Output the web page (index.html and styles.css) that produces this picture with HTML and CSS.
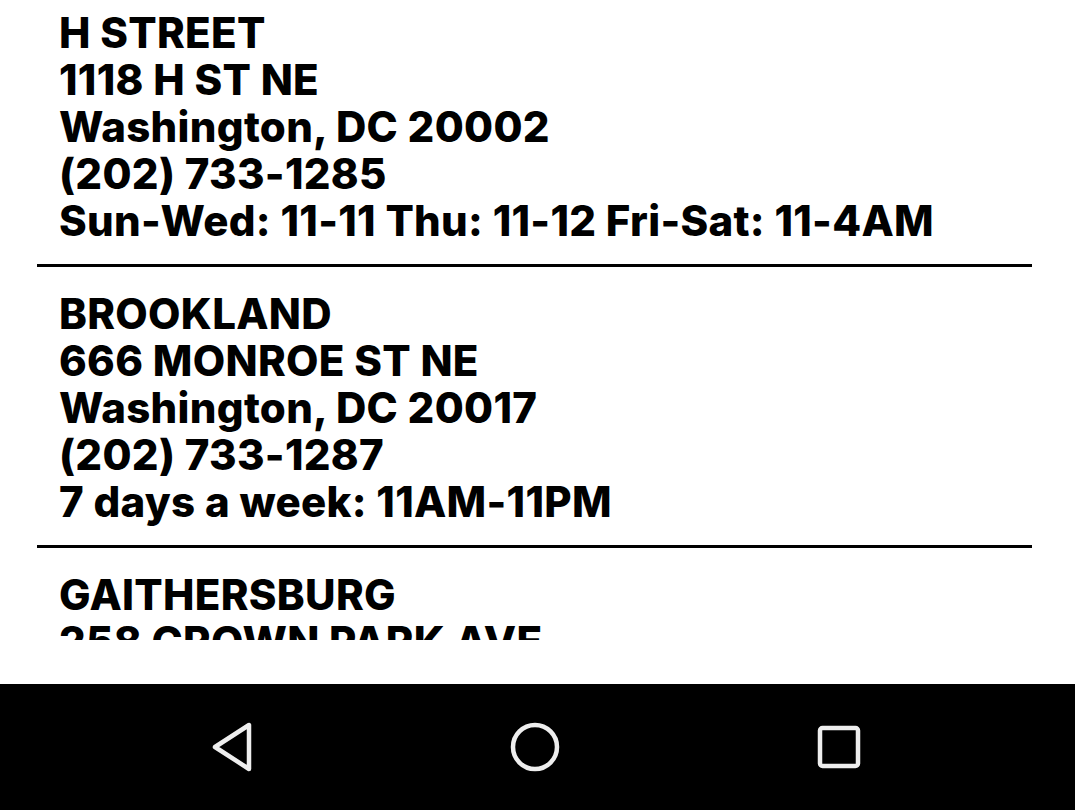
FILE: index.html
```html
<!DOCTYPE html>
<html>
<head>
<meta charset="utf-8">
<link rel="stylesheet" href="styles.css">
</head>
<body>
<div class="screen">
  <div class="scroller">
    <div class="list">
      <div class="loc">
        <div class="line">H STREET</div>
        <div class="line">1118 H ST NE</div>
        <div class="line">Washington, DC 20002</div>
        <div class="line">(202) 733-1285</div>
        <div class="line">Sun-Wed: 11-11 Thu: 11-12 Fri-Sat: 11-4AM</div>
      </div>
      <div class="loc">
        <div class="line">BROOKLAND</div>
        <div class="line">666 MONROE ST NE</div>
        <div class="line">Washington, DC 20017</div>
        <div class="line">(202) 733-1287</div>
        <div class="line">7 days a week: 11AM-11PM</div>
      </div>
      <div class="loc">
        <div class="line">GAITHERSBURG</div>
        <div class="line">258 CROWN PARK AVE</div>
        <div class="line">Gaithersburg, MD 20878</div>
      </div>
    </div>
  </div>
  <div class="gap"></div>
  <nav class="navbar">
    <div class="slot"><svg class="nav-icon" width="48" height="52" viewBox="0 0 48 52"><path d="M42 4 L42 48 L8 26 Z" fill="none" stroke="#eee" stroke-width="4.5" stroke-linejoin="round"/></svg></div>
    <div class="slot"><svg class="nav-icon" width="52" height="52" viewBox="0 0 52 52"><circle cx="26" cy="26" r="22" fill="none" stroke="#eee" stroke-width="4.5"/></svg></div>
    <div class="slot"><svg class="nav-icon" width="48" height="48" viewBox="0 0 48 48"><rect x="5" y="5" width="38" height="38" rx="2.5" fill="none" stroke="#eee" stroke-width="4.5"/></svg></div>
  </nav>
</div>
</body>
</html>
```

FILE: styles.css
```css
html, body {
  margin: 0;
  padding: 0;
  background: #fff;
}
.screen {
  width: 1075px;
  height: 810px;
  display: flex;
  flex-direction: column;
  overflow: hidden;
}
.scroller {
  height: 640px;
  overflow: hidden;
  flex: none;
}
.list {
  margin-top: -13px;
  padding: 0 43px 0 37px;
}
.loc {
  padding: 22px 0 20px 22px;
  border-bottom: 3px solid #000;
}
.loc + .loc {
  padding-top: 23px;
}
.line {
  font-family: Inter, "Liberation Sans", sans-serif;
  font-weight: 800;
  font-size: 42px;
  letter-spacing: 0.3px;
  line-height: 47px;
  height: 47px;
  color: #000;
  white-space: nowrap;
}
.gap {
  height: 44px;
  flex: none;
}
.navbar {
  height: 126px;
  flex: none;
  background: #000;
  display: flex;
  align-items: center;
  justify-content: center;
  padding-right: 5px;
}
.slot {
  width: 304px;
  display: flex;
  justify-content: center;
}
.nav-icon {
  display: block;
}
```
